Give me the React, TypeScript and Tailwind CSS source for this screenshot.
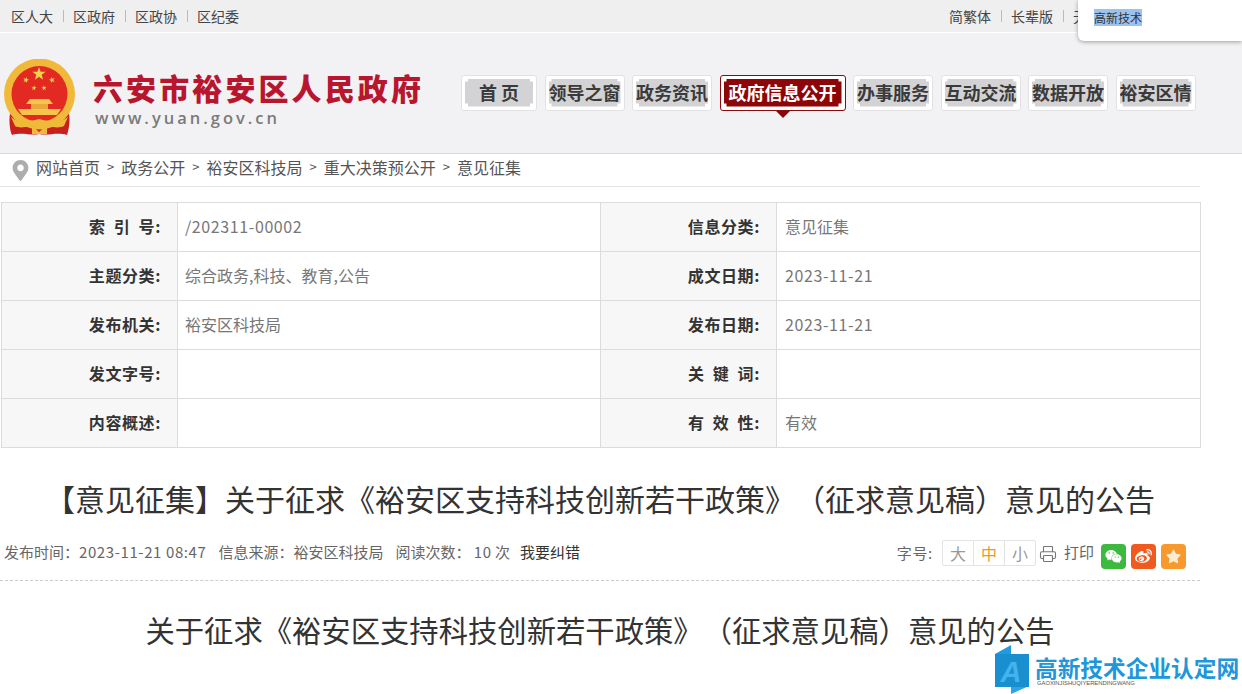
import React from 'react';
import { Printer } from 'lucide-react';
import { FaWeixin, FaWeibo, FaStar, FaMapMarkerAlt } from 'react-icons/fa';

const navItems = [
  { label: '首 页', w: 'w-[76px]' },
  { label: '领导之窗', w: 'w-[80px]' },
  { label: '政务资讯', w: 'w-[80px]' },
  { label: '政府信息公开', w: 'w-[126px]', active: true },
  { label: '办事服务', w: 'w-[80px]' },
  { label: '互动交流', w: 'w-[80px]' },
  { label: '数据开放', w: 'w-[80px]' },
  { label: '裕安区情', w: 'w-[80px]' },
];

const rows = [
  ['索 引 号:', '/202311-00002', '信息分类:', '意见征集'],
  ['主题分类:', '综合政务,科技、教育,公告', '成文日期:', '2023-11-21'],
  ['发布机关:', '裕安区科技局', '发布日期:', '2023-11-21'],
  ['发文字号:', '', '关 键 词:', ''],
  ['内容概述:', '', '有 效 性:', '有效'],
];

const crumbs = ['网站首页', '政务公开', '裕安区科技局', '重大决策预公开', '意见征集'];

const Star = ({ x, y, r, rotate = 0 }: { x: number; y: number; r: number; rotate?: number }) => {
  const pts = Array.from({ length: 10 }, (_, i) => {
    const a = (Math.PI / 5) * i - Math.PI / 2 + (rotate * Math.PI) / 180;
    const d = i % 2 === 0 ? r : r * 0.4;
    return `${x + d * Math.cos(a)},${y + d * Math.sin(a)}`;
  }).join(' ');
  return <polygon points={pts} fill="#f7d24a" />;
};

const Emblem = () => (
  <svg width="73" height="77" viewBox="0 0 73 77" className="shrink-0 mt-[12px]">
    <path d="M8 50 C5 60 7 72 9 76 C20 73 28 77 36 75 C45 77 54 73 64 76 C66 70 68 60 65 50 Z" fill="#c8201f" />
    <circle cx="36.5" cy="35" r="35.5" fill="#f1b93a" />
    <circle cx="36.5" cy="35" r="28" fill="#e22a22" />
    <Star x={36} y={15} r={7} />
    <Star x={23} y={21} r={3.2} rotate={15} />
    <Star x={49} y={21} r={3.2} rotate={-15} />
    <Star x={31} y={29} r={2.8} rotate={10} />
    <Star x={41} y={29} r={2.8} rotate={-10} />
    <path d="M27 40 L46 40 L50 45 L23 45 Z" fill="#f5c44c" />
    <rect x="28" y="45" width="17" height="5" fill="#e9a83a" />
    <path d="M15 50 H58 L54 56 H19 Z" fill="#f5c44c" />
    <path d="M8 58 C18 66 26 62 36 60 C46 62 55 66 65 58 L61 67 C52 71 44 65 36 66 C28 65 20 71 12 67 Z" fill="#f1b93a" />
    <path d="M29 66 L36 73 L44 66 L44 75 L29 75 Z" fill="#f1b93a" />
  </svg>
);

const NavButton = ({ label, w, active }: { label: string; w: string; active?: boolean }) => (
  <div className={`relative ${w} h-[36px] shrink-0 p-[3px] rounded-[3px] border ${active ? 'border-[#8b0a0e] bg-white' : 'border-[#e2e2e4] bg-white'}`}>
    <div className={`h-full flex items-center justify-center text-[18px] font-bold whitespace-nowrap [clip-path:polygon(3px_0,calc(100%_-_3px)_0,calc(100%_-_3px)_3px,100%_3px,100%_calc(100%_-_3px),calc(100%_-_3px)_calc(100%_-_3px),calc(100%_-_3px)_100%,3px_100%,3px_calc(100%_-_3px),0_calc(100%_-_3px),0_3px,3px_3px)] ${active ? 'bg-[#8e0508] text-white' : 'bg-[#d3d3d5] text-[#3a3a3a]'}`}>
      {label}
    </div>
    {active && (
      <div className="absolute left-1/2 -translate-x-1/2 top-[35px] w-0 h-0 border-l-[7px] border-r-[7px] border-t-[7px] border-l-transparent border-r-transparent border-t-[#8e0508]" />
    )}
  </div>
);

const App: React.FC = () => {
  return (
    <div className="relative w-[1242px] h-[694px] overflow-hidden bg-white [text-spacing-trim:space-all] font-['Noto_Sans_CJK_SC','Noto_Sans',sans-serif]">
      {/* top bar */}
      <div className="h-[33px] bg-[#efefef] border-b border-white flex items-center justify-between pl-[11px] text-[14px] text-[#444]">
        <div className="flex items-center">
          <span>区人大</span>
          <span className="ml-[10px] mr-[9px] h-[12px] w-px bg-[#bbb]" />
          <span>区政府</span>
          <span className="ml-[10px] mr-[9px] h-[12px] w-px bg-[#bbb]" />
          <span>区政协</span>
          <span className="ml-[10px] mr-[9px] h-[12px] w-px bg-[#bbb]" />
          <span>区纪委</span>
        </div>
        <div className="flex items-center w-[293px] whitespace-nowrap overflow-hidden">
          <span>简繁体</span>
          <span className="ml-[10px] mr-[9px] h-[12px] w-px bg-[#bbb]" />
          <span>长辈版</span>
          <span className="ml-[10px] mr-[9px] h-[12px] w-px bg-[#bbb]" />
          <span>无障碍</span>
        </div>
      </div>

      {/* popup */}
      <div className="absolute top-0 right-0 w-[164px] h-[41px] bg-white rounded-bl-[6px] shadow-[0_1px_4px_rgba(0,0,0,0.35)] pl-[16px] pt-[9px] text-[12px] leading-[17px] text-[#333]">
        <span className="bg-[#9cc2ee]">高新技术</span>
      </div>

      {/* header */}
      <div className="h-[121px] bg-[#f2f2f4] border-b border-[#d8d8d8] flex items-center pl-[3px] pb-[4px]">
        <Emblem />
        <div className="ml-[17px] w-[368px] mt-[15px]">
          <div className="h-[30px] text-[30px] leading-[30px] font-black tracking-[3.1px] text-[#b8162e] whitespace-nowrap">六安市裕安区人民政府</div>
          <div className="mt-[8px] h-[16px] font-['Open_Sans',sans-serif] text-[16.5px] leading-[16px] tracking-[3px] font-semibold text-[#7a7a7a] pl-[2px]">www.yuan.gov.cn</div>
        </div>
        <div className="flex items-center gap-[7.5px] mt-[3px]">
          {navItems.map((item) => (
            <NavButton key={item.label} {...item} />
          ))}
        </div>
      </div>

      <div className="w-[1200px]">
        {/* breadcrumb */}
        <div className="h-[33px] border-b border-[#e3e3e3] flex items-center pl-[10px] pb-[6px] text-[16px] text-[#555] whitespace-nowrap">
          <FaMapMarkerAlt className="text-[#adadad] mr-[5px] mt-[6px]" size={21} />
          {crumbs.map((c, i) => (
            <React.Fragment key={c}>
              {i > 0 && <span className="mx-[7px] text-[13px]">&gt;</span>}
              <span>{c}</span>
            </React.Fragment>
          ))}
        </div>

        {/* info table */}
        <table className="mt-[15px] ml-px w-[1199px] table-fixed border-collapse text-[16px]">
          <colgroup>
            <col className="w-[176px]" />
            <col className="w-[423px]" />
            <col className="w-[176px]" />
            <col className="w-[424px]" />
          </colgroup>
          <tbody>
            {rows.map((r) => (
              <tr key={r[0]} className="h-[49px]">
                <td className="border border-[#dcdcdc] bg-[#f7f7f7] text-right pr-[16px] pb-[2px] font-semibold tracking-[0.6px] text-[#333] whitespace-pre [word-spacing:4px]">{r[0]}</td>
                <td className={`border border-[#dcdcdc] pl-[7px] pb-[2px] text-[#777] ${/^[\d/-]+$/.test(r[1]) ? 'tracking-[0.6px]' : ''}`}>{r[1]}</td>
                <td className="border border-[#dcdcdc] bg-[#f7f7f7] text-right pr-[16px] pb-[2px] font-semibold tracking-[0.6px] text-[#333] whitespace-pre [word-spacing:4px]">{r[2]}</td>
                <td className={`border border-[#dcdcdc] pl-[8px] pb-[2px] text-[#777] ${/^[\d/-]+$/.test(r[3]) ? 'tracking-[0.6px]' : ''}`}>{r[3]}</td>
              </tr>
            ))}
          </tbody>
        </table>

        <h1 className="mt-[28px] h-[44px] text-center text-[30px] leading-[44px] font-normal text-[#333] whitespace-nowrap">
          【意见征集】关于征求《裕安区支持科技创新若干政策》（征求意见稿）意见的公告
        </h1>

        {/* meta row */}
        <div className="mt-[18px] h-[43px] border-b border-dashed border-[#ccc] flex items-start justify-between pl-[4px] pr-[14px] text-[15px] text-[#666] whitespace-nowrap">
          <div className="flex items-center h-[26px] mt-[1px]">
            <span>发布时间：<span className="tracking-[0.6px]">2023-11-21 08:47</span></span>
            <span className="ml-[12px]">信息来源：裕安区科技局</span>
            <span className="ml-[12px]">阅读次数： <span className="tracking-[0.5px]">10</span> 次</span>
            <span className="ml-[10px] text-[#333]">我要纠错</span>
          </div>
          <div className="flex items-start">
            <span className="mt-[2px] leading-[26px] mr-[9px] tracking-[0.7px]">字号:</span>
            <div className="flex h-[26px] mt-[2px] border border-[#e4e4e4] rounded-[2px] text-[16px] text-[#999]">
              <span className="w-[31px] flex items-center justify-center border-r border-[#e4e4e4]">大</span>
              <span className="w-[31px] flex items-center justify-center border-r border-[#e4e4e4] text-[#f0962e]">中</span>
              <span className="w-[30px] flex items-center justify-center">小</span>
            </div>
            <Printer size={18} strokeWidth={1.5} className="ml-[3px] mt-[7px] text-[#777]" />
            <span className="ml-[7px] mt-[1px] leading-[26px]">打印</span>
            <span className="ml-[7px] mt-[6px] w-[25px] h-[25px] rounded-[4px] bg-[#3cb93e] flex items-center justify-center text-white"><FaWeixin size={17} /></span>
            <span className="ml-[5px] mt-[6px] w-[25px] h-[25px] rounded-[4px] bg-[#f05a1e] flex items-center justify-center text-white"><FaWeibo size={17} /></span>
            <span className="ml-[5px] mt-[6px] w-[25px] h-[25px] rounded-[4px] bg-[#f8992e] flex items-center justify-center text-[#fdeccf]"><FaStar size={15} /></span>
          </div>
        </div>

        <h2 className="mt-[26px] text-center text-[29.33px] leading-[44px] font-normal text-[#333] whitespace-nowrap">
          关于征求《裕安区支持科技创新若干政策》（征求意见稿）意见的公告
        </h2>
      </div>

      {/* watermark */}
      <div className="absolute right-[3px] bottom-0 w-[244px] h-[49px] flex items-start">
        <svg width="34" height="49" viewBox="0 0 34 49" className="shrink-0">
          <path d="M0 9 L16 0 L16 9 Z" fill="#1f9be0" />
          <path d="M16 41 L16 49 L34 41 Z" fill="#2aa5e8" />
          <rect x="0" y="9" width="34" height="33" fill="#1a8fd0" />
          <text x="16" y="37" textAnchor="middle" fontSize="29" fontWeight="900" fontStyle="italic" fontFamily="Liberation Sans, sans-serif" fill="#43b3ee">A</text>
        </svg>
        <div className="ml-[6px] mt-[11px]">
          <div className="h-[23px] text-[22.7px] leading-[23px] font-bold text-[#2196d8] whitespace-nowrap">高新技术企业认定网</div>
          <div className="ml-[2px] font-['Liberation_Sans',sans-serif] text-[5.8px] leading-[8px] text-[#555] whitespace-nowrap">GAOXINJISHUQIYERENDINGWANG</div>
        </div>
      </div>
    </div>
  );
};

export default App;
